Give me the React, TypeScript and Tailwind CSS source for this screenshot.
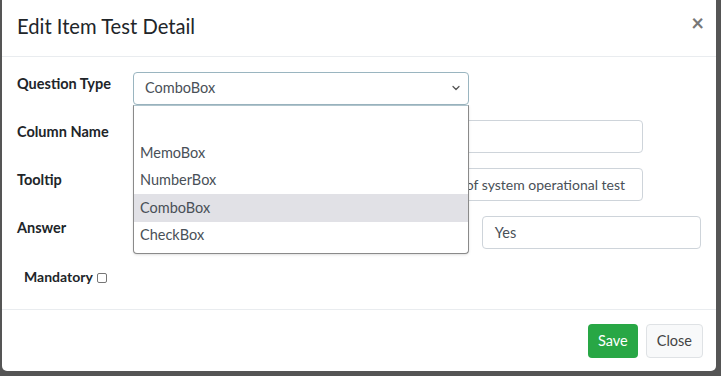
import { ChevronDown } from 'lucide-react'

const font = { fontFamily: 'Lato, "Open Sans", sans-serif' }

const options = ['', 'MemoBox', 'NumberBox', 'ComboBox', 'CheckBox']

function Label({ children }: { children: React.ReactNode }) {
  return (
    <label className="-mt-[9px] w-[116px] shrink-0 text-[14.5px] font-bold text-[#212529]">{children}</label>
  )
}

export default function App() {
  return (
    <div className="h-[376px] w-[721px] overflow-hidden bg-[#555555] pl-[2px] pr-[5px]" style={font}>
      <div className="relative -mt-2 flex h-[379px] flex-col rounded-b-[5px] bg-white">
        <div className="flex h-[65px] shrink-0 items-center justify-between border-b border-[#e9ecef] px-[15px] pt-[4px]">
          <h4 className="text-[20.2px] text-[#212529]">Edit Item Test Detail</h4>
          <button type="button" className="-mr-[3px] -mt-[6px] text-[22px] font-bold leading-none text-[#777]">
            ×
          </button>
        </div>

        <div className="relative flex-1 px-[15px] pt-[15px]">
          <div className="flex h-[32px] items-center">
            <Label>Question Type</Label>
            <div className="flex h-[33px] w-[336px] items-center justify-between rounded-[4px] border border-[#9ab5c0] pl-[11px] pr-[6px] text-[14.5px] text-[#495057]">
              <span>ComboBox</span>
              <ChevronDown size={12} strokeWidth={2.5} className="text-[#555]" />
            </div>
          </div>

          <div className="mt-[16px] flex h-[33px] items-center">
            <Label>Column Name</Label>
            <div className="h-[33px] w-[510px] rounded-[4px] border border-[#ced4da]" />
          </div>

          <div className="mt-[15px] flex h-[33px] items-center">
            <Label>Tooltip</Label>
            <div className="flex h-[33px] w-[510px] items-center justify-end overflow-hidden whitespace-nowrap rounded-[4px] border border-[#ced4da] pr-[17px] text-[14px] text-[#495057]">
              Checklist of system operational test
            </div>
          </div>

          <div className="mt-[15px] flex h-[33px] items-center">
            <Label>Answer</Label>
            <div className="h-[33px] w-[336px] rounded-[4px] border border-[#ced4da]" />
            <div className="ml-[14px] flex h-[33px] w-[220px] items-center rounded-[4px] border border-[#ced4da] pl-[12px] text-[14.5px] text-[#495057]">
              Yes
            </div>
          </div>

          <div className="mt-[17px] flex items-center pl-[7px]">
            <span className="text-[14px] font-bold text-[#212529]">Mandatory</span>
            <span className="ml-[4px] mt-[2px] h-[10px] w-[10px] rounded-[2px] border border-[#767676]" />
          </div>

          <div className="absolute left-[131px] top-[48px] w-[336px] rounded-b-[4px] border border-[#8a8a8a] border-t-[#b0c4cc] bg-white pb-[4px] pt-[4px] text-[14.5px] text-[#495057] shadow-sm">
            {options.map((o) => (
              <div
                key={o || 'empty'}
                className={`flex h-[27.5px] items-center pl-[6px] ${o === '' ? 'h-[29px]' : ''} ${o === 'ComboBox' ? 'bg-[#e1e1e6]' : ''}`}
              >
                {o}
              </div>
            ))}
          </div>
        </div>

        <div className="flex h-[62px] shrink-0 items-center justify-end gap-[8px] border-t border-[#e9ecef] pl-[13px] pr-[13px] pt-[1px]">
          <button type="button" className="h-[34px] rounded-[4px] bg-[#28a745] px-[10px] text-[14.5px] text-white">
            Save
          </button>
          <button
            type="button"
            className="h-[34px] rounded-[4px] border border-[#dfe2e5] bg-[#f8f9fa] px-[10px] text-[14.5px] text-[#444]"
          >
            Close
          </button>
        </div>
      </div>
    </div>
  )
}
